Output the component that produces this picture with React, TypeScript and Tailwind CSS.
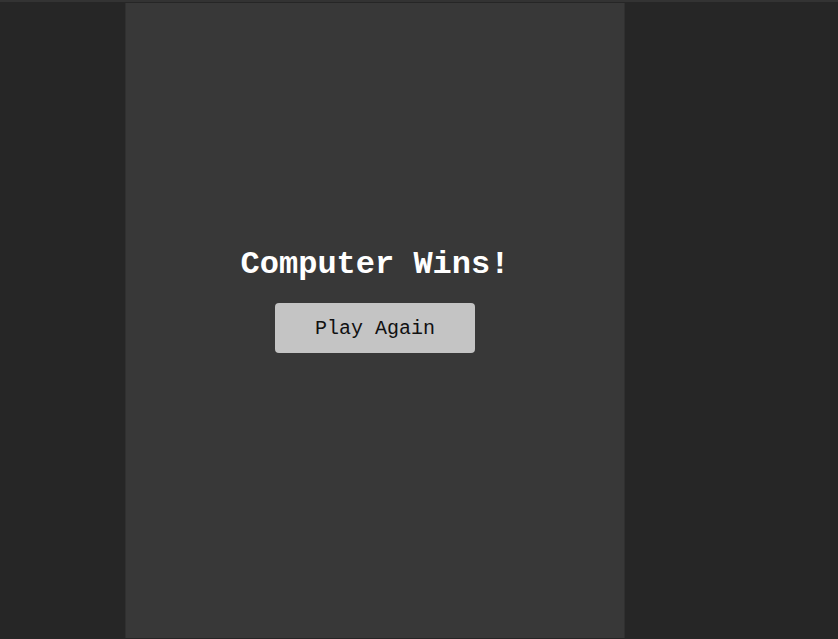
export default function App() {
  return (
    <div className="w-[838px] h-[639px] bg-[#262626] border-t-2 border-[#333333] flex justify-start pl-[125px] pt-px pb-px overflow-hidden" style={{ fontFamily: '"Liberation Mono", "Courier New", monospace' }}>
      <div className="w-[500px] h-full bg-[#383838] border-x border-[#303030] flex flex-col items-center justify-center pb-[41px]">
        <h2 className="text-[32px] leading-[36px] font-bold text-white">Computer Wins!</h2>
        <button className="mt-[20px] w-[200px] h-[50px] rounded-[4px] bg-[#c4c4c4] text-[20px] leading-[28px] pt-px text-[#111111]">Play Again</button>
      </div>
    </div>
  );
}
